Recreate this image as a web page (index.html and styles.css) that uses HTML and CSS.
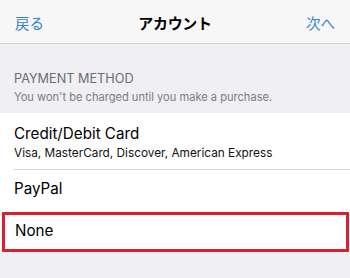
FILE: index.html
```html
<!DOCTYPE html>
<html lang="ja">
<head>
<meta charset="utf-8">
<link rel="stylesheet" href="styles.css">
</head>
<body>
<div class="screen">
  <header class="nav">
    <span class="nav-btn">戻る</span>
    <span class="nav-title">アカウント</span>
    <span class="nav-btn">次へ</span>
  </header>
  <div class="section-head">
    <div class="section-title">PAYMENT METHOD</div>
    <div class="section-sub">You won't be charged until you make a purchase.</div>
  </div>
  <ul class="list">
    <li class="row row-card">
      <div class="row-title">Credit/Debit Card</div>
      <div class="row-sub">Visa, MasterCard, Discover, American Express</div>
    </li>
    <li class="row row-paypal">
      <div class="row-title">PayPal</div>
    </li>
    <li class="row row-none">
      <div class="row-title">None</div>
    </li>
  </ul>
</div>
</body>
</html>
```
FILE: styles.css
```css
* { box-sizing: border-box; }
html, body { margin: 0; padding: 0; }
body {
  background: #efeff4;
  font-family: Inter, "Noto Sans CJK JP", sans-serif;
  color: #000;
  width: 350px;
  height: 278px;
  overflow: hidden;
}
.screen { width: 350px; }
.nav {
  height: 44px;
  background: #f7f7f8;
  border-bottom: 1px solid #d2d2d6;
  display: flex;
  align-items: center;
  justify-content: space-between;
  padding: 3px 15px 0 15px;
}
.nav-btn {
  color: #3583d3;
  font-size: 14.5px;
  font-family: "Noto Sans CJK JP", sans-serif;
  line-height: 20px;
}
.nav-title {
  font-family: "Noto Sans CJK JP", sans-serif;
  font-weight: 700;
  font-size: 15px;
  line-height: 20px;
  letter-spacing: -0.3px;
}
.section-head {
  height: 69px;
  padding: 27px 14px 0 14px;
  color: #6d6d72;
}
.section-title {
  font-size: 12.7px;
  line-height: 16px;
}
.section-sub {
  margin-top: 2px;
  font-size: 11.1px;
  line-height: 16px;
  color: #7c7c81;
}
.list {
  list-style: none;
  margin: 0;
  padding: 0;
  background: #fff;
}
.row {
  padding-left: 14px;
  position: relative;
  background: #fff;
}
.row-title {
  font-size: 15.2px;
  line-height: 20px;
}
.row-sub {
  margin-top: 1px;
  font-size: 11.8px;
  line-height: 16px;
  color: #111;
}
.row-card {
  height: 57px;
  padding-top: 11px;
}
.row-card::after {
  content: "";
  position: absolute;
  left: 14px;
  right: 0;
  bottom: 0;
  height: 1px;
  background: #d6d6da;
}
.row-paypal {
  height: 42px;
  padding-top: 9px;
}
.row-none {
  height: 40px;
  margin: 0 1px 0 2px;
  padding-left: 10px;
  padding-top: 6px;
  border: 3px solid #d8202e;
}
```
